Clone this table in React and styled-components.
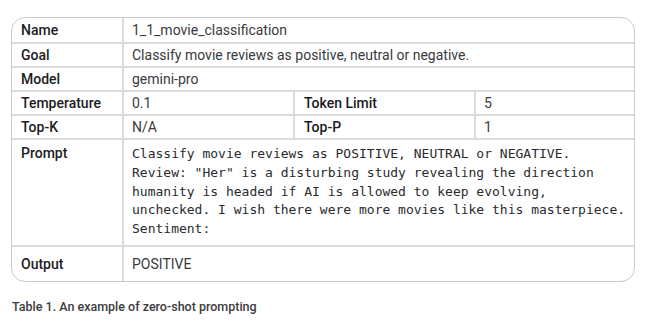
import React from "react"
import styled, { createGlobalStyle } from "styled-components"

const GlobalStyle = createGlobalStyle`
  body {
    margin: 0;
    background: #ffffff;
    font-family: Roboto, "Liberation Sans", Arial, sans-serif;
  }
`

const Page = styled.div`
  padding: 17px 13px 0 11px;
  width: 648px;
  box-sizing: border-box;
`

const Frame = styled.div`
  border: 1px solid #c9c9ce;
  border-radius: 14px;
  overflow: hidden;
  width: 624px;
  box-sizing: border-box;
`

const Table = styled.table`
  width: 100%;
  table-layout: fixed;
  border-collapse: collapse;
  border-style: hidden;
`

const Cell = styled.td`
  border: 2px solid #dadadf;
  padding: ${(p) => (p.$tall ? "5px 7px 6px 8px" : "0 7px 0 8px")};
  height: ${(p) => p.$h || 24}px;
  vertical-align: ${(p) => (p.$top ? "top" : "middle")};
  font-size: 14px;
  color: #3a3a3d;
  box-sizing: border-box;
`

const Label = styled(Cell)`
  font-weight: 500;
  color: #1c1c1e;
  padding-left: 9px;
`

const Mono = styled.pre`
  margin: 0;
  font-family: "DejaVu Sans Mono", "Liberation Mono", monospace;
  font-size: 13px;
  line-height: 18.8px;
  color: #2a2a2d;
  white-space: pre;
`

const Caption = styled.div`
  margin-top: 17px;
  margin-left: 1px;
  font-size: 12.5px;
  font-weight: 500;
  color: #3c3c40;
`

const prompt = `Classify movie reviews as POSITIVE, NEUTRAL or NEGATIVE.
Review: "Her" is a disturbing study revealing the direction
humanity is headed if AI is allowed to keep evolving,
unchecked. I wish there were more movies like this masterpiece.
Sentiment:`

export default function App() {
  return (
    <Page>
      <GlobalStyle />
      <Frame>
        <Table>
          <colgroup>
            <col style={{ width: 111 }} />
            <col style={{ width: 171 }} />
            <col style={{ width: 181 }} />
            <col />
          </colgroup>
          <tbody>
            <tr>
              <Label $h={25}>Name</Label>
              <Cell colSpan={3}>1_1_movie_classification</Cell>
            </tr>
            <tr>
              <Label>Goal</Label>
              <Cell colSpan={3}>Classify movie reviews as positive, neutral or negative.</Cell>
            </tr>
            <tr>
              <Label>Model</Label>
              <Cell colSpan={3}>gemini-pro</Cell>
            </tr>
            <tr>
              <Label>Temperature</Label>
              <Cell>0.1</Cell>
              <Label>Token Limit</Label>
              <Cell>5</Cell>
            </tr>
            <tr>
              <Label>Top-K</Label>
              <Cell>N/A</Cell>
              <Label>Top-P</Label>
              <Cell>1</Cell>
            </tr>
            <tr>
              <Label $top $tall $h={105}>Prompt</Label>
              <Cell $top $tall colSpan={3}>
                <Mono>{prompt}</Mono>
              </Cell>
            </tr>
            <tr>
              <Label $h={35}>Output</Label>
              <Cell colSpan={3}>POSITIVE</Cell>
            </tr>
          </tbody>
        </Table>
      </Frame>
      <Caption>Table 1. An example of zero-shot prompting</Caption>
    </Page>
  )
}
